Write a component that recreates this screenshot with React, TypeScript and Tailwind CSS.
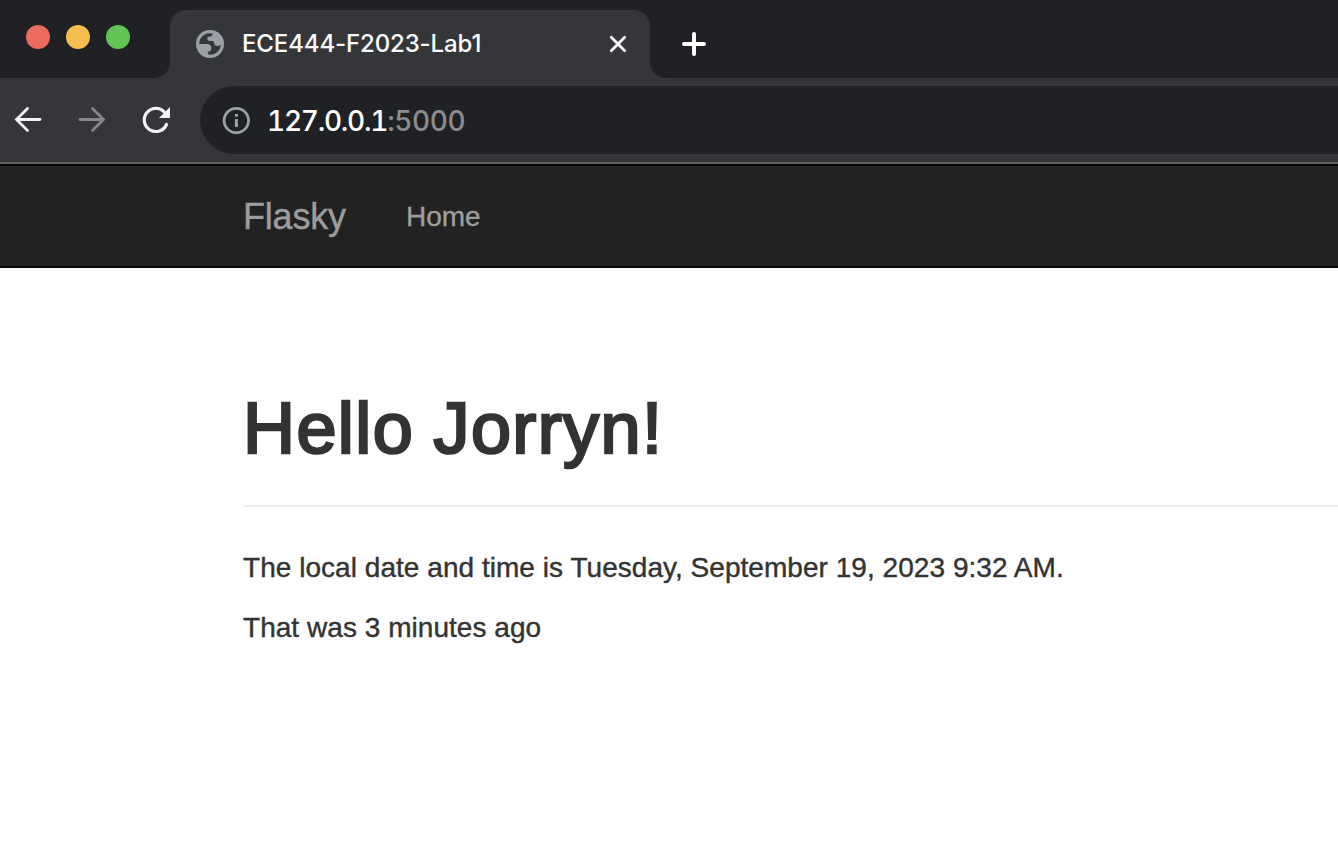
function TabStrip() {
  return (
    <div className="flex h-[78px] items-end bg-[#202124]">
      <div className="flex h-[78px] w-[154px] items-start gap-4 pl-[26px] pt-[25px]">
        <span className="size-6 rounded-full bg-[#ec6a5e]" />
        <span className="size-6 rounded-full bg-[#f5bf4f]" />
        <span className="size-6 rounded-full bg-[#61c554]" />
      </div>
      <svg className="size-4" viewBox="0 0 16 16" fill="#35363a">
        <path d="M16 0v16H0A16 16 0 0 0 16 0z" />
      </svg>
      <div className="flex h-[68px] w-[480px] items-center rounded-t-2xl bg-[#35363a] pl-[26px] pr-[22px]">
        <svg className="size-7 shrink-0" viewBox="0 0 28 28">
          <circle cx="14" cy="14" r="14" fill="#9aa0a6" />
          <path
            d="M3.200 14C3.200 8 7.500 3.500 13.500 3.200L16.500 3.400C16.500 5.700 15.500 6.500 13.800 6.500C12 6.500 11.300 7.300 11.300 8.800C11.300 10.300 12.300 11 14 11H16.500C17.500 11 18 11.700 18 12.800C18 14.800 19.500 16 21.500 16C23 16 23.800 15.300 24.700 14.800C24.600 20 20.500 24.500 14.500 24.800C12.500 24.800 11.700 24 11.900 21.700C14 21.700 15.300 20.700 15.300 18.500C15.300 15.500 13.800 14 11.300 14Z"
            fill="#35363a"
          />
        </svg>
        <span className="ml-[18px] grow whitespace-nowrap text-[24px] font-[450] leading-8 tracking-[-0.13px] text-white">
          ECE444-F2023-Lab1
        </span>
        <svg className="size-5" viewBox="0 0 20 20" stroke="#fff" strokeWidth="2.800" strokeLinecap="round">
          <path d="M3.300 3.300l13.400 13.400M16.700 3.300L3.300 16.700" />
        </svg>
      </div>
      <svg className="size-4" viewBox="0 0 16 16" fill="#35363a">
        <path d="M0 0v16h16A16 16 0 0 1 0 0z" />
      </svg>
      <svg className="mb-[22px] ml-4 size-6" viewBox="0 0 24 24" stroke="#fff" strokeWidth="4" strokeLinecap="round">
        <path d="M12 2v20M2 12h20" />
      </svg>
    </div>
  );
}

function Toolbar() {
  return (
    <div className="flex h-[86px] items-start border-b-2 border-[#606164] bg-[#35363a] pt-2">
      <div className="flex h-[68px] w-[200px] shrink-0 items-center gap-8 pl-3">
        <svg className="size-8" viewBox="0 0 32 32" fill="none" stroke="#f1f3f4" strokeWidth="2.800" strokeLinecap="round">
          <path d="M28 15.500H4.500M15.500 4.500l-11 11 11 11" />
        </svg>
        <svg className="size-8" viewBox="0 0 32 32" fill="none" stroke="#86878a" strokeWidth="2.800" strokeLinecap="round">
          <path d="M4 15.500h23.500M16.500 4.500l11 11-11 11" />
        </svg>
        <svg className="size-8" viewBox="0 0 32 32">
          <path d="M26.500 20.500A11.600 11.600 0 1 1 24.200 7.800" fill="none" stroke="#f1f3f4" strokeWidth="3.200" strokeLinecap="round" />
          <path d="M30 3v11H19z" fill="#f1f3f4" />
        </svg>
      </div>
      <div className="flex h-[68px] grow items-center rounded-l-full bg-[#202124] pl-[22px]">
        <svg className="size-7" viewBox="0 0 28 28" fill="#9aa0a6">
          <circle cx="14.300" cy="14.500" r="12.200" fill="none" stroke="#9aa0a6" strokeWidth="2.800" />
          <path d="M12.900 8h3v2.800h-3zM12.900 13h3v8h-3z" />
        </svg>
        <span className="ml-[17px] whitespace-nowrap pt-px text-[28px] font-[450] tabular-nums leading-8 tracking-[-1.250px] text-white">
          127.0.0.1<span className="tracking-[-0.400px] text-[#8b8c8e]">:5000</span>
        </span>
      </div>
    </div>
  );
}

function Navbar() {
  return (
    <nav className="flex h-[104px] items-center border-y-2 border-[#080808] bg-[#222] pl-[243px] pt-0.5 font-['Liberation_Sans',sans-serif] text-[#9d9d9d] [-webkit-text-stroke:0.4px_#9d9d9d]">
      <a className="w-[103px] whitespace-nowrap text-[36px] leading-10 tracking-[-0.2px]">Flasky</a>
      <a className="ml-[60px] whitespace-nowrap text-[28px] leading-10">Home</a>
    </nav>
  );
}

export default function App() {
  return (
    <div className="h-[844px] w-full overflow-hidden bg-white font-[Inter,sans-serif]">
      <TabStrip />
      <Toolbar />
      <Navbar />
      <main className="pl-[243px] pt-[121px] font-['Liberation_Sans',sans-serif] text-[#333]">
        <h1 className="border-b-2 border-[#eee] pb-[37px] text-[72px] leading-[79px] tracking-[1.400px] [-webkit-text-stroke:2.6px_#333] [word-spacing:-2px]">
          Hello Jorryn!
        </h1>
        <div className="flex flex-col gap-5 pt-[41px] text-[28px] leading-10 tracking-[0.04px] [-webkit-text-stroke:0.4px_#333]">
          <p>The local date and time is Tuesday, September 19, 2023 9:32 AM.</p>
          <p>That was 3 minutes ago</p>
        </div>
      </main>
    </div>
  );
}
